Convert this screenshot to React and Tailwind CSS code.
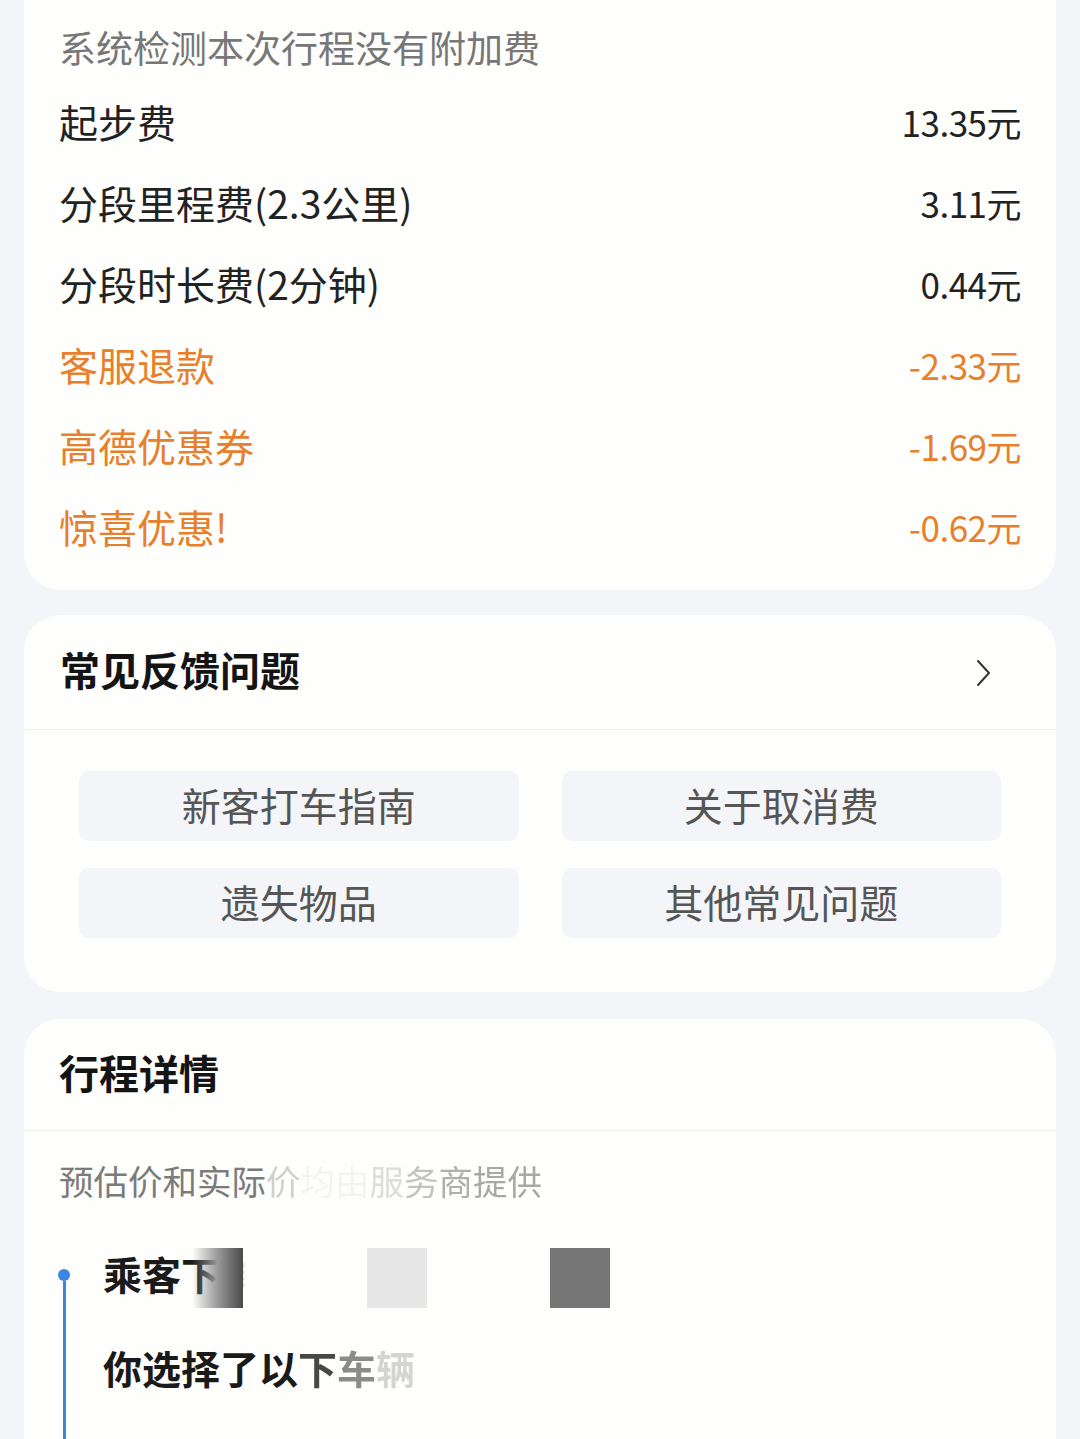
const font = { fontFamily: '"Noto Sans CJK SC", "Noto Sans", sans-serif' }

const fees = [
    { label: '起步费', value: '13.35元', orange: false },
    { label: '分段里程费(2.3公里)', value: '3.11元', orange: false },
    { label: '分段时长费(2分钟)', value: '0.44元', orange: false },
    { label: '客服退款', value: '-2.33元', orange: true },
    { label: '高德优惠券', value: '-1.69元', orange: true },
    { label: '惊喜优惠!', value: '-0.62元', orange: true },
]

const faqs = ['新客打车指南', '关于取消费', '遗失物品', '其他常见问题']

function Faded({ text, levels }) {
    return text.split('').map((ch, i) => (
        <span key={i} style={{ opacity: levels[i] ?? 1 }}>{ch}</span>
    ))
}

function App() {
    return (
        <div className="min-h-screen bg-[#f4f5f9] px-[24px] pb-10 overflow-hidden" style={font}>
            <div className="bg-[#fefefc] rounded-b-[36px] px-[35px] pt-[13px] pb-[23px]">
                <div className="h-[68px] flex items-center text-[37px] text-[#777] leading-none">系统检测本次行程没有附加费</div>
                {fees.map((f) => (
                    <div key={f.label} className={`h-[81px] flex items-center justify-between text-[39px] leading-none ${f.orange ? 'text-[#e8802b]' : 'text-[#222]'}`}>
                        <span>{f.label}</span>
                        <span className="text-[35px] tracking-[-0.5px]">{f.value}</span>
                    </div>
                ))}
            </div>

            <div className="bg-[#fefefc] rounded-[36px] mt-[25px]">
                <div className="h-[115px] flex items-center justify-between pl-[36px] pr-[64px] pb-[6px] border-b border-[#efefef]">
                    <span className="text-[40px] font-bold text-[#141414]">常见反馈问题</span>
                    <svg width="18" height="28" viewBox="0 0 18 28" fill="none" className="mt-[8px]">
                        <path d="M4 2 L15 14 L4 26" stroke="#333" strokeWidth="2" strokeLinecap="round" strokeLinejoin="round" />
                    </svg>
                </div>
                <div className="grid grid-cols-2 gap-x-[43px] gap-y-[27px] px-[55px] pt-[41px] pb-[54px]">
                    {faqs.map((q) => (
                        <div key={q} className="h-[70px] rounded-[10px] bg-[#f4f5f9] flex items-center justify-center pb-[4px] text-[39px] text-[#555]">{q}</div>
                    ))}
                </div>
            </div>

            <div className="bg-[#fefefc] rounded-[36px] mt-[27px] pb-10">
                <div className="h-[112px] flex items-center pl-[35px] pb-[6px] border-b border-[#efefef]">
                    <span className="text-[40px] font-bold text-[#141414]">行程详情</span>
                </div>
                <div className="h-[100px] flex items-center pl-[35px] pb-[2px] text-[34.5px] text-[#7b7b7b] leading-none">
                    <Faded text="预估价和实际价均由服务商提供" levels={[1, 1, 1, 1, 1, 1, 0.35, 0.08, 0.08, 0.25, 0.45, 0.6, 0.65, 0.65]} />
                </div>
                <div className="flex pl-[34px]">
                    <div className="w-[12px] flex flex-col items-center pt-[38px]">
                        <div className="w-[12px] h-[12px] rounded-full bg-[#3a86e0]" />
                        <div className="w-[3px] flex-1 bg-[#3a86e0] min-h-[200px]" />
                    </div>
                    <div className="pl-[33px] flex-1">
                        <div className="h-[60px] mt-[12px] flex items-center">
                            <div className="relative w-[140px] h-[60px] flex items-center text-[39px] font-bold text-[#1a1a1a] leading-none whitespace-nowrap">
                                <span>乘客下</span>
                                <span className="bg-[linear-gradient(90deg,#1a1a1a_0%,#1a1a1a_40%,rgba(26,26,26,0)_64%)] bg-clip-text text-transparent">单</span>
                                <div className="absolute left-[89px] top-[5px] w-[51px] h-[60px] bg-gradient-to-r from-[rgba(255,255,255,0)] via-[#9a9a9a] to-[#4a4a4a]" />
                            </div>
                            <div className="w-[60px] h-[60px] bg-[#e7e7e7] ml-[124px] mt-[10px]" />
                            <div className="w-[60px] h-[60px] bg-[#767676] ml-[123px] mt-[10px]" />
                        </div>
                        <div className="h-[70px] mt-[29px] flex items-center text-[39px] font-bold text-[#1a1a1a] leading-none">
                            <Faded text="你选择了以下车辆" levels={[1, 1, 1, 1, 1, 0.8, 0.5, 0.18]} />
                        </div>
                    </div>
                </div>
            </div>
        </div>
    )
}
export default App
